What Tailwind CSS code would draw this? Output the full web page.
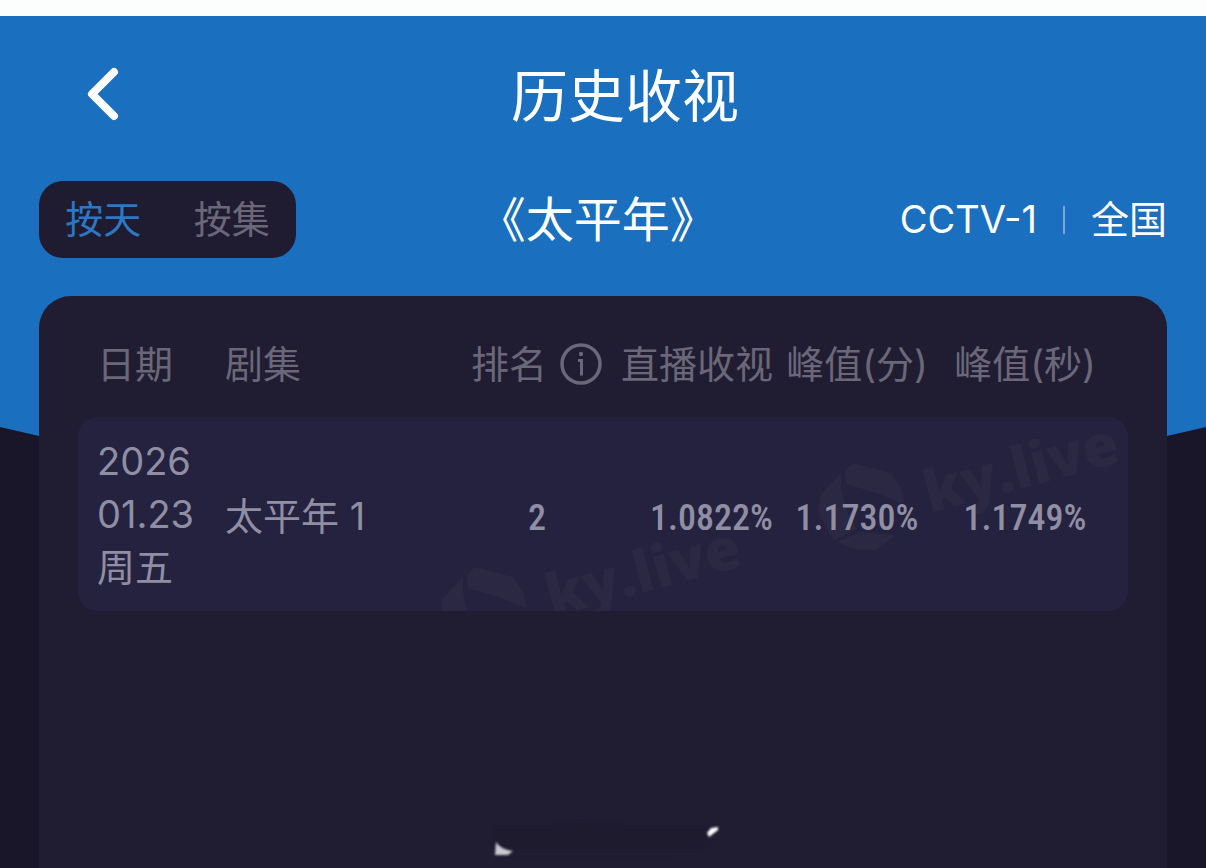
<!DOCTYPE html>
<html lang="zh-CN">
  <head>
    <meta charset="utf-8" />
    <meta content="width=device-width, initial-scale=1" name="viewport" />
    <title>历史收视</title>
    <script src="https://cdn.jsdelivr.net/npm/@tailwindcss/browser@4"></script>
    <style>
      body {
        font-family: "Inter", "Noto Sans CJK SC", sans-serif;
      }
    </style>
  </head>
  <body class="bg-[#fcfefe] pt-4 min-h-screen flex flex-col">
    <div class="relative isolate flex-grow flex flex-col bg-[#181628]">
      <!-- blue backdrop, pointed at the bottom -->
      <div class="absolute inset-x-0 top-0 -z-10 h-[552px] bg-[#1b6fbf] [clip-path:polygon(0_0,100%_0,100%_411px,50%_550px,0_411px)]"></div>

      <header class="h-[156px] px-20 flex items-center text-white">
        <button type="button" aria-label="返回" class="w-11 h-16 flex items-center justify-center">
          <svg class="w-11 h-16" viewBox="0 0 44 64" fill="none" stroke="currentColor" stroke-width="8" stroke-linecap="round" stroke-linejoin="round">
            <path d="M34 10L12 32L34 54" />
          </svg>
        </button>
        <h1 class="flex-grow pt-1.5 text-center text-[57px] leading-[80px]">历史收视</h1>
      </header>

      <div class="px-[39px] pt-[9px] flex items-center justify-between text-white text-[38px] leading-[77px]">
        <div class="w-[257px] bg-[#1f1c31] rounded-3xl flex">
          <button type="button" aria-pressed="true" class="flex-1 text-[#2b78c4]">按天</button>
          <button type="button" aria-pressed="false" class="flex-1 text-[#6b6778]">按集</button>
        </div>
        <h2 class="text-[48px]">《太平年》</h2>
        <div class="flex items-center">
          <span>CCTV-1</span>
          <span class="w-[2px] h-7 mx-[26px] bg-white/40"></span>
          <span>全国</span>
        </div>
      </div>

      <main class="flex-grow mx-[39px] mt-[38px] px-[39px] pt-[42px] pb-3 bg-[#201d32] rounded-t-[32px] flex flex-col justify-between">
        <table class="w-full table-fixed text-[38px] leading-[53px] whitespace-nowrap">
          <colgroup>
            <col class="w-[147px]" />
            <col />
            <col class="w-[172px]" />
            <col class="w-[152px]" />
            <col class="w-[168px]" />
            <col class="w-[187px]" />
          </colgroup>
          <thead class="text-[#6a6779]">
            <tr>
              <th class="pl-[19px] pb-[26px] font-normal text-left">日期</th>
              <th class="pb-[26px] font-normal text-left">剧集</th>
              <th class="pl-1 pb-[26px] font-normal">
                <span class="flex items-center justify-center gap-3">
                  排名
                  <svg class="w-11 h-11" viewBox="0 0 44 44" fill="none" stroke="currentColor">
                    <circle cx="22" cy="21" r="19" stroke-width="3.5" />
                    <path d="M19 17.5H22.5V32.5" stroke-width="3" />
                    <circle cx="22" cy="11" r="2.2" fill="currentColor" stroke="none" />
                  </svg>
                </span>
              </th>
              <th class="pb-[26px] font-normal text-right">直播收视</th>
              <th class="pb-[26px] font-normal">峰值(分)</th>
              <th class="pb-[26px] pr-[19px] font-normal">峰值(秒)</th>
            </tr>
          </thead>
          <tbody class="text-[#908ea3]">
            <tr class="relative bg-[#25223f]">
              <td class="pl-[19px] pt-[18px] pb-[17px] rounded-l-[20px]">
                <svg class="absolute inset-0 w-full h-full" aria-hidden="true" fill="#2b2844">
                  <defs>
                    <g id="mark">
                      <path d="M19 2L27 -6L65 4L75 19L79 35L69 32L54 25L20 15Z" />
                      <path d="M15 4L-5 25L-8 44L8 72L30 60L19 37L15 20Z" />
                      <path d="M11 73L34 63L69 66L51 81L31 81Z" />
                      <text class="font-['Open_Sans'] font-extrabold text-[58px]" x="104" y="44" transform="rotate(-15 104 44)">ky.live</text>
                    </g>
                  </defs>
                  <use href="#mark" x="370" y="156" />
                  <use href="#mark" x="748" y="52" />
                </svg>
                <time datetime="2026-01-23" class="relative">2026<br />01.23<br />周五</time>
              </td>
              <td class="relative pt-1">太平年 1</td>
              <td class="relative pt-2 pl-1 text-center font-['Roboto_Condensed'] font-medium text-[36px]">2</td>
              <td class="relative pt-2 text-right font-['Roboto_Condensed'] font-medium text-[36px]">1.0822%</td>
              <td class="relative pt-2 text-center font-['Roboto_Condensed'] font-medium text-[36px]">1.1730%</td>
              <td class="relative pt-2 pr-[19px] text-center rounded-r-[20px] font-['Roboto_Condensed'] font-medium text-[36px]">1.1749%</td>
            </tr>
          </tbody>
        </table>

        <svg class="w-[236px] h-9 self-center overflow-visible" viewBox="0 0 236 36" aria-hidden="true">
          <path class="blur-[2px]" d="M6 6H60L90 3L150 6H228L218 28L190 33H24L8 24Z" fill="#1e1b2f" />
          <path class="blur-[1px]" d="M11 22Q15 29 28 31L23 35H10Z" fill="#c9c7cf" />
          <path class="blur-[1px]" d="M222 13L226 8L233 7V10L224 17Z" fill="#ffffff" />
        </svg>
      </main>
    </div>
  </body>
</html>
